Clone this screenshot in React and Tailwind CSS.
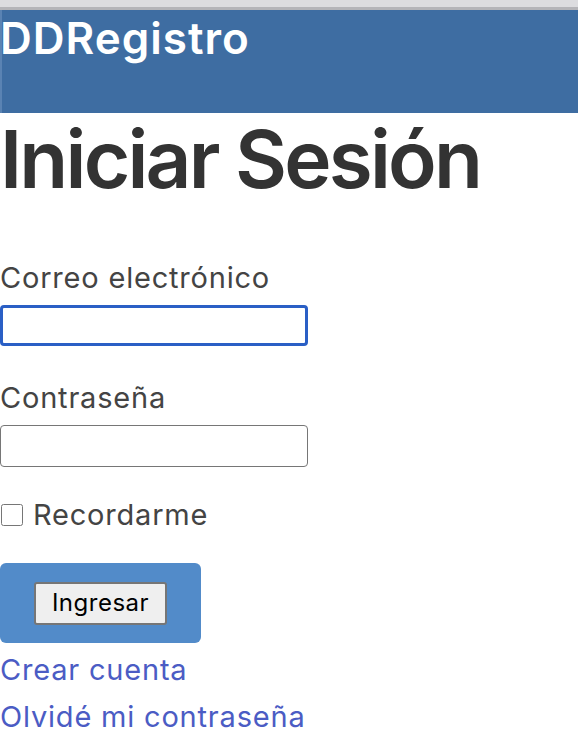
export default function App() {
  return (
    <div className="min-h-screen bg-white">
      <div className="h-[7px] bg-[#dcdcdf]" />
      <div className="h-[3px] bg-[#b4b4b8]" />
      <header className="h-[103px] bg-[#3e6da2] border-l-2 border-[#5a83b3]">
        <h1 className="font-['Inter',sans-serif] text-[44px] leading-[56px] font-semibold text-white -ml-[2px] tracking-[1px]">
          DDRegistro
        </h1>
      </header>
      <main className="font-['Inter',sans-serif]">
        <h2 className="text-[80px] leading-[96px] font-semibold text-[#333] -mt-[2px] tracking-[-2.8px]">
          Iniciar Sesión
        </h2>
        <form className="mt-[55px]" onSubmit={(e) => e.preventDefault()}>
          <label className="block text-[29px] leading-[32px] tracking-[0.8px] text-[#444]">Correo electrónico</label>
          <input
            type="email"
            autoFocus
            className="mt-[11px] block h-[41px] w-[308px] rounded-[4px] border-[3px] border-[#2a5fc5] bg-white outline-none"
          />
          <label className="mt-[36px] block text-[29px] leading-[32px] tracking-[0.8px] text-[#444]">Contraseña</label>
          <input
            type="password"
            className="mt-[11px] block h-[42px] w-[308px] rounded-[4px] border border-[#767676] bg-white outline-none"
          />
          <label className="mt-[32px] flex items-center gap-[9px] text-[29px] leading-[32px] tracking-[0.8px] text-[#444]">
            <input type="checkbox" className="h-[22px] w-[24px] m-0 rounded-[4px]" />
            Recordarme
          </label>
          <div className="mt-[32px] flex h-[80px] w-[201px] items-center justify-center rounded-[6px] bg-[#528bc9]">
            <button
              type="submit"
              className="h-[43px] w-[133px] rounded-[3px] border-2 border-[#767676] bg-[#efefef] text-[24px] tracking-[0.5px] text-black"
            >
              Ingresar
            </button>
          </div>
          <div className="mt-[3px] text-[29px] leading-[47px] tracking-[0.8px] text-[#4b5cc4]">
            <a className="block" href="#">Crear cuenta</a>
            <a className="block" href="#">Olvidé mi contraseña</a>
          </div>
        </form>
      </main>
    </div>
  );
}
